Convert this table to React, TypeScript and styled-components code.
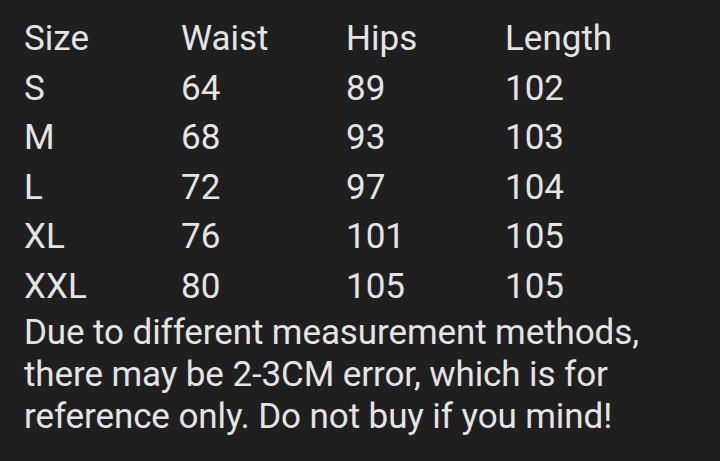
import styled, { createGlobalStyle } from "styled-components";

const GlobalStyle = createGlobalStyle`
  html, body {
    margin: 0;
    padding: 0;
    background: #1f1f1f;
  }
  body {
    font-family: Roboto, "Noto Sans", sans-serif;
    color: #e4e4e4;
  }
`;

const rows = [
  ["Size", "Waist", "Hips", "Length"],
  ["S", "64", "89", "102"],
  ["M", "68", "93", "103"],
  ["L", "72", "97", "104"],
  ["XL", "76", "101", "105"],
  ["XXL", "80", "105", "105"],
];

const Page = styled.div`
  width: 720px;
  height: 461px;
  box-sizing: border-box;
  padding: 14px 0 0 24px;
  background: #1f1f1f;
  overflow: hidden;
`;

const Table = styled.div`
  display: grid;
  grid-template-columns: 157px 165px 159px auto;
  font-size: 35px;
  line-height: 49.6px;
`;

const Cell = styled.div`
  white-space: nowrap;
`;

const Note = styled.p`
  margin: 0;
  font-size: 35px;
  line-height: 42px;
  letter-spacing: -0.1px;
  width: 690px;
`;

export default function App() {
  return (
    <>
      <GlobalStyle />
      <Page>
        <Table>
          {rows.map((row) =>
            row.map((v, i) => <Cell key={row[0] + i}>{v}</Cell>)
          )}
        </Table>
        <Note>
          Due to different measurement methods,
          <br />
          there may be 2-3CM error, which is for
          <br />
          reference only. Do not buy if you mind!
        </Note>
      </Page>
    </>
  );
}
